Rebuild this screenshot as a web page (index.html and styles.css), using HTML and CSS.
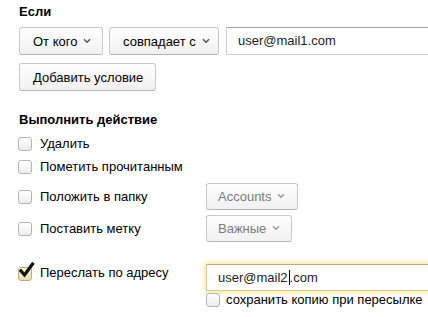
FILE: index.html
```html
<!DOCTYPE html>
<html>
<head>
<meta charset="utf-8">
<link rel="stylesheet" href="styles.css">
</head>
<body>
<div class="page">
  <div class="title">Если</div>
  <div class="cond-row">
    <button class="btn">От кого <svg class="chev" width="8" height="6" viewBox="0 0 8 6"><path d="M1 1.2 L4 4.2 L7 1.2" fill="none" stroke="#555" stroke-width="1.5"/></svg></button>
    <button class="btn">совпадает с <svg class="chev" width="8" height="6" viewBox="0 0 8 6"><path d="M1 1.2 L4 4.2 L7 1.2" fill="none" stroke="#555" stroke-width="1.5"/></svg></button>
    <div class="input cond-input">user@mail1.com</div>
  </div>
  <div class="add-row">
    <button class="btn">Добавить условие</button>
  </div>

  <div class="title actions-title">Выполнить действие</div>
  <div class="act act-simple"><span class="cb"></span><span class="lbl">Удалить</span></div>
  <div class="act act-simple act-second"><span class="cb"></span><span class="lbl">Пометить прочитанным</span></div>
  <div class="act act-ctrl act-folder">
    <div class="lblcol"><span class="cb"></span><span class="lbl">Положить в папку</span></div>
    <button class="btn btn-dis">Accounts <svg class="chev" width="8" height="6" viewBox="0 0 8 6"><path d="M1 1.2 L4 4.2 L7 1.2" fill="none" stroke="#999" stroke-width="1.5"/></svg></button>
  </div>
  <div class="act act-ctrl act-label">
    <div class="lblcol"><span class="cb"></span><span class="lbl">Поставить метку</span></div>
    <button class="btn btn-dis">Важные <svg class="chev" width="8" height="6" viewBox="0 0 8 6"><path d="M1 1.2 L4 4.2 L7 1.2" fill="none" stroke="#999" stroke-width="1.5"/></svg></button>
  </div>
  <div class="act act-fwd">
    <div class="lblcol fwd-lbl">
      <span class="cb cb-checked"><svg class="tick" width="18" height="18" viewBox="0 0 18 18"><path d="M3 9 L6.5 13 L14.5 2" fill="none" stroke="#111" stroke-width="3.2" stroke-linecap="square"/></svg></span>
      <span class="lbl">Переслать по адресу</span>
    </div>
    <div class="fwd-ctrl">
      <div class="input fwd-input">user@mail2<span class="caret"></span>.com</div>
      <div class="keep"><span class="cb"></span><span class="lbl">сохранить копию при пересылке</span></div>
    </div>
  </div>
</div>
</body>
</html>
```

FILE: styles.css
```css
* { box-sizing: border-box; }
html, body { margin: 0; padding: 0; background: #fff; overflow: hidden; }
body {
  font-family: "Liberation Sans", Arial, sans-serif;
  font-size: 13px;
  line-height: 16px;
  color: #000;
}
.page { padding: 4px 0 0 19px; width: 428px; }
.title { font-weight: bold; height: 16px; margin-bottom: 7px; }
.cond-row { display: flex; align-items: center; height: 28px; }
.btn {
  font-family: inherit;
  font-size: 13px;
  color: #000;
  height: 28px;
  padding: 0 12px 0 13px;
  border: 1px solid #c9c9c9;
  border-bottom-color: #b5b5b5;
  border-radius: 3px;
  background: linear-gradient(#ffffff, #f1f1f1);
  display: inline-flex;
  align-items: center;
  gap: 6px;
  margin: 0;
  white-space: nowrap;
}
.cond-row .btn:nth-child(1) { width: 84px; margin-right: 6px; }
.cond-row .btn:nth-child(2) { width: 110px; margin-right: 7px; }
.chev { display: block; flex: none; margin-top: -1px; }
.input {
  height: 28px;
  border: 1px solid #cfcfcf;
  border-top-color: #a3a3a3;
  background: #fff;
  padding-left: 11px;
  display: flex;
  align-items: center;
  color: #222;
}
.cond-input { width: 220px; flex: none; }
.add-row { margin-top: 8px; height: 28px; }
.add-row .btn { width: 137px; }

.actions-title { margin-top: 21px; margin-bottom: 8px; }
.act { display: flex; align-items: center; }
.act-simple { height: 16px; }
.act-second { margin-top: 7px; }
.cb {
  width: 14px; height: 14px;
  flex: none;
  margin-left: -1px;
  border: 1px solid #b4b4b4;
  border-radius: 3px;
  background: linear-gradient(#ffffff, #ececec);
  position: relative;
}
.lbl { margin-left: 8px; white-space: nowrap; }
.lblcol { display: flex; align-items: center; width: 187px; flex: none; }
.act-folder { margin-top: 8px; height: 27px; }
.act-label { margin-top: 5px; height: 27px; }
.btn-dis { color: #7a7a7a; height: 27px; padding: 0 11px 0 11px; }
.act-folder .btn-dis { width: 92px; }
.act-label .btn-dis { width: 86px; }

.act-fwd { margin-top: 22px; align-items: flex-start; }
.fwd-lbl { margin-top: 1px; height: 16px; }
.cb-checked { background: linear-gradient(#f7efd2, #eadfb4); border-color: #b8aa82; margin-top: 2px; }
.tick { position: absolute; left: -1px; top: -6px; }
.fwd-ctrl { display: flex; flex-direction: column; }
.fwd-input {
  width: 240px; height: 27px;
  border-color: #d2c9a8;
  border-top-color: #b9ad88;
  box-shadow: 0 0 5px 1px rgba(255, 204, 0, 0.55);
  color: #222;
}
.caret { display: inline-block; width: 1px; height: 15px; background: #000; margin: 0 0 0 1px; }
.keep { display: flex; align-items: center; height: 14px; margin-top: 2px; }
.keep .cb { margin-left: 0; }
.keep .lbl { margin-left: 6px; }
```
